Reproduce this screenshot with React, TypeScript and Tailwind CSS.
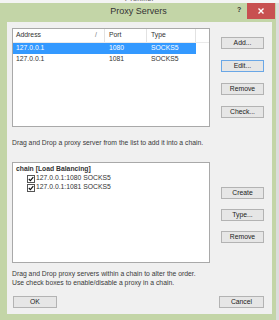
import { FC } from "react";

const font = "font-['Liberation_Sans','Arial',sans-serif]";

const Btn: FC<{ label: string; focused?: boolean; className?: string }> = ({ label, focused = false, className = "" }) => (
	<div
		className={`h-[12px] flex items-center justify-center text-[6.8px] text-[#222] bg-[#e6e6e6] border ${focused ? "border-[#6aa7e6]" : "border-[#b3b3b3]"} ${className}`}
	>
		{label}
	</div>
);

const Check: FC = () => (
	<div className="w-[8px] h-[8px] border border-[#555] bg-white flex items-center justify-center">
		<svg width="6" height="6" viewBox="0 0 6 6">
			<path d="M0.8 3 L2.4 4.6 L5.3 1.2" fill="none" stroke="#111" strokeWidth="1.2" />
		</svg>
	</div>
);

const ProxyRow: FC<{ addr: string; port: string; type: string; selected?: boolean }> = ({ addr, port, type, selected = false }) => (
	<div className={`h-[11px] w-[183px] flex items-center text-[6.8px] ${selected ? "bg-[#3399ff] text-white" : "text-[#333]"}`}>
		<div className="w-[92px] pl-[3px]">{addr}</div>
		<div className="w-[42px] pl-[4px]">{port}</div>
		<div className="w-[49px] pl-[4px]">{type}</div>
	</div>
);

export default function App() {
	return (
		<div className={`w-[279px] h-[320px] bg-[#dcdcdc] flex flex-col overflow-hidden ${font}`}>
			<div className="h-[3px] bg-[#f4f4f4] flex justify-center overflow-hidden">
				<span className="text-[8px] leading-[8px] -mt-[5px] text-[#666]">Proxifier</span>
			</div>
			<div className="w-[276px] flex-1 bg-[#c3d5a7] flex flex-col">
				{/* title bar */}
				<div className="h-[19px] flex items-start">
					<div className="flex-1 h-[18px] flex items-center justify-center pl-[40px] text-[9px] text-[#333]">Proxy Servers</div>
					<div className="w-[8px] h-[14px] flex items-center text-[7px] font-bold text-[#333]">?</div>
					<div className="w-[28px] h-[16px] ml-[2px] mr-[1px] bg-[#c85050] flex items-center justify-center">
						<svg width="6" height="6" viewBox="0 0 6 6">
							<path d="M0.5 0.5 L5.5 5.5 M5.5 0.5 L0.5 5.5" stroke="white" strokeWidth="1.4" />
						</svg>
					</div>
				</div>

				{/* client area */}
				<div className="ml-[7px] mr-[4px] h-[292px] bg-[#f0f0f0] flex flex-col pl-[5px] pr-[8px] pt-[6px]">
					<div className="flex gap-[11px]">
						<div className="w-[198px] h-[99px] bg-white border border-[#a9a9a9] flex flex-col">
							<div className="h-[14px] flex items-stretch text-[6.8px] text-[#333] border-b border-[#eaeaea]">
								<div className="w-[92px] flex items-center justify-between pl-[3px] pr-[7px] border-r border-[#e2e2e2]">
									<span>Address</span>
									<span className="text-[#777]">/</span>
								</div>
								<div className="w-[42px] flex items-center pl-[4px] border-r border-[#e2e2e2]">Port</div>
								<div className="w-[49px] flex items-center pl-[4px] border-r border-[#e2e2e2]">Type</div>
							</div>
							<ProxyRow addr="127.0.0.1" port="1080" type="SOCKS5" selected />
							<ProxyRow addr="127.0.0.1" port="1081" type="SOCKS5" />
						</div>
						<div className="w-[43px] flex flex-col gap-[11px] pt-[9px]">
							<Btn label="Add..." />
							<Btn label="Edit..." focused />
							<Btn label="Remove" />
							<Btn label="Check..." />
						</div>
					</div>

					<div className="h-[35px] flex items-center text-[6.8px] text-[#3a3a3a] pb-[2px]">
						Drag and Drop a proxy server from the list to add it into a chain.
					</div>

					<div className="flex gap-[11px]">
						<div className="w-[198px] h-[101px] bg-white border border-[#a9a9a9] flex flex-col pt-[1px] text-[6.8px] text-[#333]">
							<div className="h-[10px] flex items-center pl-[3px] font-bold">chain [Load Balancing]</div>
							<div className="h-[9px] flex items-center gap-[1px] pl-[14px]">
								<Check />
								<span>127.0.0.1:1080 SOCKS5</span>
							</div>
							<div className="h-[9px] flex items-center gap-[1px] pl-[14px]">
								<Check />
								<span>127.0.0.1:1081 SOCKS5</span>
							</div>
						</div>
						<div className="w-[43px] flex flex-col gap-[10px] pt-[25px]">
							<Btn label="Create" />
							<Btn label="Type..." />
							<Btn label="Remove" />
						</div>
					</div>

					<div className="pt-[6px] text-[6.8px] leading-[9px] text-[#3a3a3a]">
						<div>Drag and Drop proxy servers within a chain to alter the order.</div>
						<div>Use check boxes to enable/disable a proxy in a chain.</div>
					</div>

					<div className="flex justify-between mt-[9px] pl-[1px]">
						<Btn label="OK" className="w-[44px]" />
						<Btn label="Cancel" className="w-[45px]" />
					</div>
				</div>
			</div>
		</div>
	);
}
